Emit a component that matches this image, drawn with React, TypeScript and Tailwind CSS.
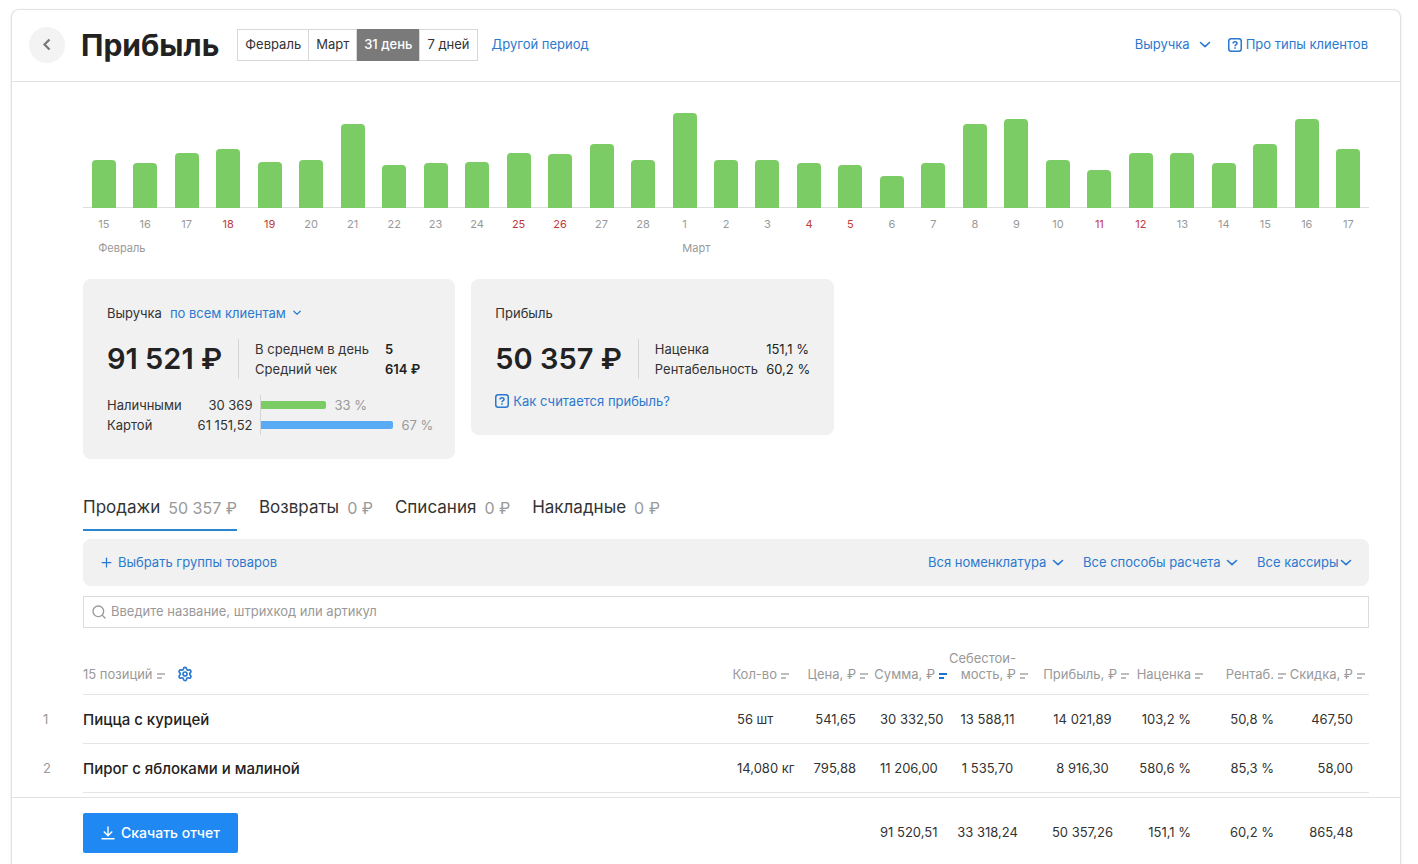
import React, { useState } from "react";
import clsx from "clsx";
import { Plus, Search, Settings } from "lucide-react";

type Day = { day: number; height: number; weekend?: boolean; month?: string };

const days: Day[] = [
  { day: 15, height: 48, month: "Февраль" },
  { day: 16, height: 45 },
  { day: 17, height: 55 },
  { day: 18, height: 59, weekend: true },
  { day: 19, height: 46, weekend: true },
  { day: 20, height: 48 },
  { day: 21, height: 84 },
  { day: 22, height: 43 },
  { day: 23, height: 45 },
  { day: 24, height: 46 },
  { day: 25, height: 55, weekend: true },
  { day: 26, height: 54, weekend: true },
  { day: 27, height: 64 },
  { day: 28, height: 48 },
  { day: 1, height: 95, month: "Март" },
  { day: 2, height: 48 },
  { day: 3, height: 48 },
  { day: 4, height: 45, weekend: true },
  { day: 5, height: 43, weekend: true },
  { day: 6, height: 32 },
  { day: 7, height: 45 },
  { day: 8, height: 84 },
  { day: 9, height: 89 },
  { day: 10, height: 48 },
  { day: 11, height: 38, weekend: true },
  { day: 12, height: 55, weekend: true },
  { day: 13, height: 55 },
  { day: 14, height: 45 },
  { day: 15, height: 64 },
  { day: 16, height: 89 },
  { day: 17, height: 59 },
];

const periods = ["Февраль", "Март", "31 день", "7 дней"];

const tabs = [
  { name: "Продажи", amount: "50 357 ₽" },
  { name: "Возвраты", amount: "0 ₽" },
  { name: "Списания", amount: "0 ₽" },
  { name: "Накладные", amount: "0 ₽" },
];

const columns = [
  { title: "Кол-во", cell: "pl-3 text-left" },
  { title: "Цена, ₽", cell: "pr-4 text-right" },
  { title: "Сумма, ₽", cell: "pl-2 text-left" },
  { title: "Себестои-\nмость, ₽", cell: "pr-2 text-center" },
  { title: "Прибыль, ₽", cell: "text-center" },
  { title: "Наценка", cell: "pr-4 text-right" },
  { title: "Рентаб.", cell: "pr-4 text-right" },
  { title: "Скидка, ₽", cell: "pr-4 text-right" },
];

const products = [
  {
    name: "Пицца с курицей",
    values: ["56 шт", "541,65", "30 332,50", "13 588,11", "14 021,89", "103,2 %", "50,8 %", "467,50"],
  },
  {
    name: "Пирог с яблоками и малиной",
    values: ["14,080 кг", "795,88", "11 206,00", "1 535,70", "8 916,30", "580,6 %", "85,3 %", "58,00"],
  },
];

const totals = ["", "", "91 520,51", "33 318,24", "50 357,26", "151,1 %", "60,2 %", "865,48"];

function HelpIcon() {
  return (
    <svg width="14" height="14" viewBox="0 0 14 14" fill="none" stroke="currentColor" strokeWidth="1.5" className="shrink-0">
      <rect x="0.75" y="0.75" width="12.5" height="12.5" rx="2.5" />
      <path d="M5 5.5C5 4.3 5.9 3.75 7 3.75s2 .6 2 1.7C9 6.7 7 6.6 7 8.3" />
      <path d="M7 9.3v1.5" />
    </svg>
  );
}

function ChevronIcon({ small }: { small?: boolean }) {
  return (
    <svg
      width={small ? 10 : 14}
      height={small ? 10 : 14}
      viewBox="0 0 14 14"
      fill="none"
      stroke="currentColor"
      strokeWidth="1.6"
      strokeLinecap="round"
      strokeLinejoin="round"
      className="shrink-0"
    >
      <path d="M2.5 4.5 7 8.7 11.5 4.5" />
    </svg>
  );
}

function BackIcon() {
  return (
    <svg width="14" height="14" viewBox="0 0 14 14" fill="none" stroke="currentColor" strokeWidth="2.2">
      <path d="M9.5 1.5 4.5 6.5l5 5" />
    </svg>
  );
}

function SortIcon({ active }: { active?: boolean }) {
  return (
    <svg
      width="8"
      height="6"
      viewBox="0 0 8 6"
      className={clsx("mb-[3px] ml-1 shrink-0", active ? "text-[#1a73d0]" : "text-[#a8a8a8]")}
    >
      <path d="M0 1h8M0 5h5" stroke="currentColor" strokeWidth={active ? 2 : 1.3} />
    </svg>
  );
}

function DownloadIcon() {
  return (
    <svg width="14" height="14" viewBox="0 0 14 14" fill="none" stroke="currentColor" strokeWidth="1.4">
      <path d="M7 0.5v9M2.8 5.5 7 9.7l4.2-4.2M0.5 12.8h13" />
    </svg>
  );
}

type DropdownProps = { label: string; value: string; gap?: string; small?: boolean };

function Dropdown({ label, value, gap = "gap-1", small }: DropdownProps) {
  return (
    <label className={clsx("inline-flex items-center text-[#2b79cf]", gap)}>
      <select aria-label={label} className="cursor-pointer appearance-none bg-transparent outline-none">
        <option>{value}</option>
      </select>
      <ChevronIcon small={small} />
    </label>
  );
}

function Columns() {
  return (
    <colgroup>
      <col className="w-10" />
      <col />
      <col className="w-[68px]" />
      <col className="w-[79px]" />
      <col className="w-[79px]" />
      <col className="w-[81px]" />
      <col className="w-[101px]" />
      <col className="w-[74px]" />
      <col className="w-[83px]" />
      <col className="w-[79px]" />
    </colgroup>
  );
}

function Chart() {
  return (
    <div className="pt-[31px]">
      <div className="flex h-[95px] items-end border-b border-[#dedede]">
        {days.map((item, index) => (
          <div key={index} className="-mb-px flex flex-1 justify-center">
            <div className="w-6 rounded-t-[4px] bg-[#7ccc66]" style={{ height: item.height }} />
          </div>
        ))}
      </div>
      <div className="flex h-12 pt-2 text-[11px] leading-4 text-[#999]">
        {days.map((item, index) => (
          <div key={index} className="flex w-0 flex-1 justify-center">
            <div className="flex flex-col gap-2">
              <span className={clsx(item.weekend && "text-[#c03a3a]")}>{item.day}</span>
              {item.month && <span className="w-0 whitespace-nowrap">{item.month}</span>}
            </div>
          </div>
        ))}
      </div>
    </div>
  );
}

function RevenueCard() {
  return (
    <section className="rounded-lg bg-[#f1f1f1] py-6 pl-6 pr-[22px]">
      <div className="flex items-center gap-2 leading-5">
        <h2>Выручка</h2>
        <Dropdown label="Клиенты" value="по всем клиентам" gap="gap-1.5" small />
      </div>
      <div className="mt-4 flex items-center">
        <strong className="text-[29px] font-semibold leading-10 text-[#222]">91 521 ₽</strong>
        <dl className="ml-4 grid grid-cols-[auto_auto] gap-x-4 border-l border-[#d5d5d5] pl-4 leading-5">
          <dt>В среднем в день</dt>
          <dd className="font-semibold text-[#222]">5</dd>
          <dt>Средний чек</dt>
          <dd className="font-semibold text-[#222]">614 ₽</dd>
        </dl>
      </div>
      <div className="mt-4 grid grid-cols-[auto_auto_auto] justify-start leading-5">
        <span>Наличными</span>
        <span className="pl-4 pr-2 text-right">30 369</span>
        <span className="flex items-center gap-2 border-l border-[#d5d5d5] text-[#999]">
          <span className="h-2 w-[65px] rounded-r-xs bg-[#7ccc66]" />
          33 %
        </span>
        <span>Картой</span>
        <span className="pl-4 pr-2 text-right">61 151,52</span>
        <span className="flex items-center gap-2 border-l border-[#d5d5d5] text-[#999]">
          <span className="h-2 w-[132px] rounded-r-xs bg-[#5aabf6]" />
          67 %
        </span>
      </div>
    </section>
  );
}

function ProfitCard() {
  return (
    <section className="rounded-lg bg-[#f1f1f1] p-6">
      <h2 className="leading-5">Прибыль</h2>
      <div className="mt-4 flex items-center">
        <strong className="text-[29px] font-semibold leading-10 text-[#222]">50 357 ₽</strong>
        <dl className="ml-4 grid grid-cols-[auto_auto] gap-x-2 border-l border-[#d5d5d5] pl-4 leading-5">
          <dt>Наценка</dt>
          <dd className="text-[#222]">151,1 %</dd>
          <dt>Рентабельность</dt>
          <dd className="text-[#222]">60,2 %</dd>
        </dl>
      </div>
      <a href="#profit" className="mt-3 flex items-center gap-1 leading-5 text-[#2b79cf]">
        <HelpIcon />
        Как считается прибыль?
      </a>
    </section>
  );
}

export default function App() {
  const [period, setPeriod] = useState("31 день");
  const [tab, setTab] = useState("Продажи");

  return (
    <div className="flex min-h-screen flex-col bg-white pl-[11px] pr-[17px] pt-[9px] font-['Inter',sans-serif] text-[13px] text-[#333]">
      <main className="flex flex-1 flex-col rounded-t-lg border border-b-0 border-[#e2e2e2] shadow-sm">
        <header className="flex items-center border-b border-[#e2e2e2] pb-[18px] pl-[17px] pr-8 pt-[17px]">
          <button aria-label="Назад" className="flex size-9 items-center justify-center rounded-full bg-[#f3f3f3] text-[#777]">
            <BackIcon />
          </button>
          <h1 className="ml-4 text-[30px] font-bold leading-9 text-[#222]">Прибыль</h1>
          <div className="ml-[18px] flex h-8 border border-[#d8d8d8]">
            {periods.map((item) => (
              <button
                key={item}
                onClick={() => setPeriod(item)}
                className={clsx(
                  "px-[7px] not-first:border-l not-first:border-[#d8d8d8]",
                  item === period && "-my-px bg-[#7a7a7a] font-medium text-white"
                )}
              >
                {item}
              </button>
            ))}
          </div>
          <a href="#period" className="ml-[14px] text-[#2b79cf]">
            Другой период
          </a>
          <div className="ml-auto flex items-center gap-4">
            <Dropdown label="Показатель" value="Выручка" gap="gap-2" />
            <a href="#clients" className="flex items-center gap-1 text-[#2b79cf]">
              <HelpIcon />
              Про типы клиентов
            </a>
          </div>
        </header>

        <div className="pl-[71px] pr-[31px]">
          <Chart />
          <div className="mt-[23px] flex items-start gap-4">
            <RevenueCard />
            <ProfitCard />
          </div>
          <nav className="mt-7 flex gap-[22px] text-[17px]">
            {tabs.map((item) => (
              <button
                key={item.name}
                onClick={() => setTab(item.name)}
                className={clsx(
                  "flex h-11 items-center gap-2 border-b-2",
                  item.name === tab ? "border-[#2b87d3]" : "border-transparent"
                )}
              >
                {item.name}
                <span className="text-base text-[#999]">{item.amount}</span>
              </button>
            ))}
          </nav>
          <div className="mt-2 flex h-[47px] items-center rounded-lg bg-[#f1f1f1] px-4">
            <button className="flex items-center gap-1 text-[#2b79cf]">
              <Plus size={15} />
              Выбрать группы товаров
            </button>
            <div className="ml-auto flex gap-[18px]">
              <Dropdown label="Номенклатура" value="Вся номенклатура" />
              <Dropdown label="Способ расчета" value="Все способы расчета" />
              <Dropdown label="Кассир" value="Все кассиры" gap="gap-0" />
            </div>
          </div>
          <label className="mt-[10px] flex h-8 items-center gap-1 border border-[#dcdcdc] px-[7px] text-[#999]">
            <Search size={16} />
            <input
              aria-label="Поиск товара"
              placeholder="Введите название, штрихкод или артикул"
              className="flex-1 outline-none placeholder:text-[#999]"
            />
          </label>
        </div>

        <div className="pl-[31px] pr-[31px] pt-[22px]">
          <table className="w-full table-fixed">
            <Columns />
            <thead className="align-bottom leading-4 text-[#999]">
              <tr>
                <th />
                <th className="border-b border-[#e5e5e5] pb-3 text-left font-normal">
                  <span className="flex items-end">
                    15 позиций
                    <SortIcon />
                    <button aria-label="Настроить таблицу" className="ml-3 text-[#2b79cf]">
                      <Settings size={16} strokeWidth={2.5} />
                    </button>
                  </span>
                </th>
                {columns.map((column) => (
                  <th key={column.title} className="border-b border-[#e5e5e5] pb-3 pr-1 font-normal">
                    <button className="flex w-full items-end justify-end whitespace-pre text-right">
                      {column.title}
                      <SortIcon active={column.title === "Сумма, ₽"} />
                    </button>
                  </th>
                ))}
              </tr>
            </thead>
            <tbody>
              {products.map((product, index) => (
                <tr key={product.name} className="h-[49px]">
                  <td className="pt-0.5 text-[#999]">{index + 1}</td>
                  <td className="border-b border-[#e5e5e5] pt-0.5 text-[15px] font-medium text-[#222]">{product.name}</td>
                  {product.values.map((value, i) => (
                    <td key={i} className={clsx("whitespace-nowrap border-b border-[#e5e5e5] pt-0.5", columns[i].cell)}>
                      {value}
                    </td>
                  ))}
                </tr>
              ))}
            </tbody>
          </table>
        </div>

        <footer className="sticky bottom-0 mt-1 border-t border-[#e2e2e2] bg-white px-[31px] pb-[11px] pt-[15px]">
          <table className="w-full table-fixed">
            <Columns />
            <tbody>
              <tr>
                <td />
                <td>
                  <button className="flex h-10 items-center gap-1.5 rounded-xs bg-[#2088f2] px-[18px] text-sm font-medium text-white">
                    <DownloadIcon />
                    Скачать отчет
                  </button>
                </td>
                {totals.map((value, i) => (
                  <td key={i} className={clsx("whitespace-nowrap", columns[i].cell)}>
                    {value}
                  </td>
                ))}
              </tr>
            </tbody>
          </table>
        </footer>
      </main>
    </div>
  );
}
